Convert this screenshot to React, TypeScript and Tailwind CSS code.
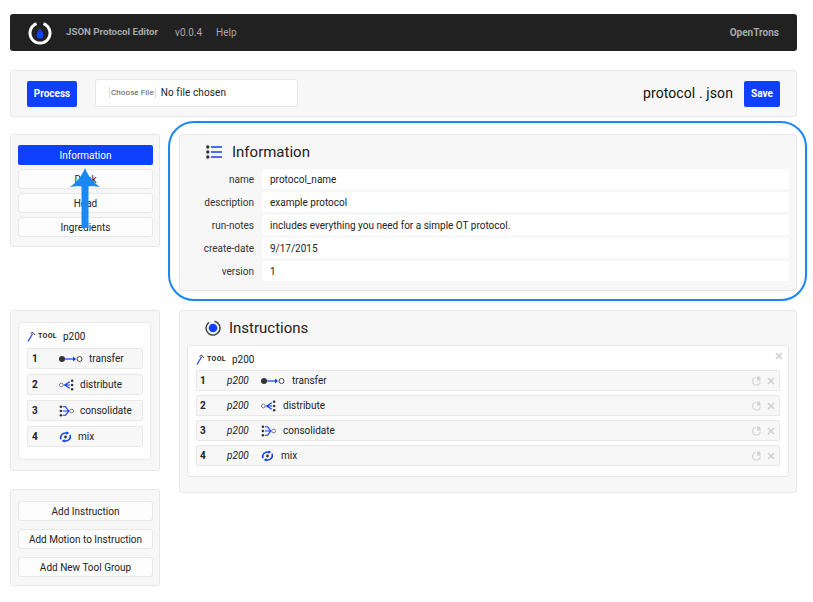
import React from 'react';

const font = { fontFamily: 'Roboto, sans-serif' };

const TransferIcon = () => (
    <svg width="24" height="8" viewBox="0 0 24 8" className="shrink-0">
        <circle cx="3" cy="4" r="3" fill="#333" />
        <path d="M6 4h10" stroke="#0f3fff" strokeWidth="1.2" fill="none" />
        <path d="M14 1.500L17 4l-3 2.500z" fill="#0f3fff" />
        <circle cx="20.500" cy="4" r="2.500" stroke="#444" strokeWidth="1" fill="#fff" />
    </svg>
);

const DistributeIcon = () => (
    <svg width="15" height="12" viewBox="0 0 16 12" className="shrink-0">
        <circle cx="2.500" cy="6" r="2" stroke="#555" strokeWidth="0.8" fill="#fff" />
        <path d="M5 6h7M6 6l5.500-3.500M6 6l5.500 3.500" stroke="#0f3fff" strokeWidth="1.200" fill="none" />
        <circle cx="14" cy="1.500" r="1.300" fill="#333" />
        <circle cx="14" cy="6" r="1.300" fill="#333" />
        <circle cx="14" cy="10.500" r="1.300" fill="#333" />
    </svg>
);

const ConsolidateIcon = () => (
    <svg width="15" height="12" viewBox="0 0 16 12" className="shrink-0">
        <circle cx="2" cy="1.500" r="1.300" fill="#333" />
        <circle cx="2" cy="6" r="1.300" fill="#333" />
        <circle cx="2" cy="10.500" r="1.300" fill="#333" />
        <path d="M4 1.500h3L10.500 6 7 10.500H4M4 6h6.500" stroke="#0f3fff" strokeWidth="1.200" fill="none" />
        <circle cx="13.500" cy="6" r="2" stroke="#555" strokeWidth="0.8" fill="#fff" />
    </svg>
);

const MixIcon = () => (
    <svg width="13" height="12" viewBox="0 0 14 12" className="shrink-0">
        <circle cx="7" cy="6" r="1.500" fill="#333" />
        <path d="M2 8.500C.8 4.500 4 1 8.500 1.800M12 3.500c1.200 4-2 7.500-6.500 6.700" stroke="#0f3fff" strokeWidth="1.700" fill="none" />
        <path d="M8 0l3 1.800L8 3.800zM6 8.200L3 10.200 6 12z" fill="#0f3fff" />
    </svg>
);

const HammerIcon = () => (
    <svg width="8" height="10" viewBox="0 0 8 10" className="shrink-0">
        <path d="M1 9.500L5.500 2" stroke="#0f3fff" strokeWidth="1.200" fill="none" />
        <path d="M3.500 1.300L6 .5 7.700 3" stroke="#333" strokeWidth="1" fill="none" />
    </svg>
);

const CopyIcon = () => (
    <svg width="9" height="10" viewBox="0 0 9 10">
        <path d="M4 1.500a3.800 3.800 0 1 0 4.200 4" stroke="#d4d4d4" strokeWidth="1.100" fill="none" />
        <path d="M5 .5h2.500L8.500 2v2.500H5z" fill="#d4d4d4" />
    </svg>
);

const CloseIcon = () => (
    <svg width="8" height="8" viewBox="0 0 8 8">
        <path d="M1 1l6 6M7 1L1 7" stroke="#d0d0d0" strokeWidth="1.700" />
    </svg>
);

const steps = [
    { n: 1, name: 'transfer', icon: <TransferIcon /> },
    { n: 2, name: 'distribute', icon: <DistributeIcon /> },
    { n: 3, name: 'consolidate', icon: <ConsolidateIcon /> },
    { n: 4, name: 'mix', icon: <MixIcon /> },
];

const info = [
    ['name', 'protocol_name'],
    ['description', 'example protocol'],
    ['run-notes', 'includes everything you need for a simple OT protocol.'],
    ['create-date', '9/17/2015'],
    ['version', '1'],
];

const panel = 'rounded-[3px] border border-[#e8e8e8] bg-[#f7f7f7]';
const whiteBtn =
    'flex items-center justify-center rounded-[3px] border border-[#e8e8e8] bg-[#fdfdfd] text-[10px] text-[#222]';

const ToolLabel = () => (
    <div className="flex items-center">
        <HammerIcon />
        <span className="ml-[3px] text-[7px] font-bold tracking-[0.3px] text-[#222]">TOOL</span>
        <span className="ml-[6px] text-[10px] text-[#222]">p200</span>
    </div>
);

const App = () => {
    return (
        <div className="relative h-[602px] w-[813px] overflow-hidden bg-[#fefefe]" style={font}>
            <div className="w-[787px] ml-[10px] pt-[14px]">
                <header className="flex h-[37px] items-center rounded-[3px] bg-[#212121] px-[18px] text-[10px] text-[#a8a8a8]">
                    <svg width="24" height="24" viewBox="0 0 24 24" className="shrink-0">
                        <path d="M8.500 2.700a10 10 0 1 0 7 0" stroke="#fff" strokeWidth="3" fill="none" />
                        <path d="M12 7.500c1.500 2.500 3.500 4 3.500 6.500a3.500 3.500 0 0 1-7 0c0-2.500 2-4 3.500-6.500z" fill="#0f3fff" />
                    </svg>
                    <span className="ml-[14px] text-[9.700px] font-bold">JSON Protocol Editor</span>
                    <span className="ml-[17px]">v0.0.4</span>
                    <span className="ml-[14px]">Help</span>
                    <span className="ml-auto font-bold">OpenTrons</span>
                </header>

                <div className={`${panel} mt-[19px] flex h-[47px] items-center px-[16px]`}>
                    <button className="h-[26px] w-[50px] rounded-[2px] bg-[#0f3fff] text-[10px] font-bold text-white">
                        Process
                    </button>
                    <div className="mb-[2px] ml-[18px] flex h-[28px] w-[203px] items-center rounded-[3px] border border-[#e8e8e8] bg-white pl-[13px] text-[10px] tracking-[0.1px] text-[#222]">
                        <span className="border-x border-[#ddd] px-[1px] text-[8px] leading-[11px] text-[#555]">
                            Choose File
                        </span>
                        <span className="ml-[5px]">No file chosen</span>
                    </div>
                    <span className="ml-auto text-[14px] tracking-[0.1px] text-[#111]">protocol . json</span>
                    <button className="ml-[11px] h-[26px] w-[36px] rounded-[2px] bg-[#0f3fff] text-[10px] font-bold text-white">
                        Save
                    </button>
                </div>

                <div className="mt-[17px] flex gap-[19px]">
                    <aside className="flex w-[150px] shrink-0 flex-col">
                        <nav className={`${panel} flex h-[113px] flex-col gap-[4px] pl-[7px] pr-[6px] pt-[10px]`}>
                            <div className="flex h-[20px] items-center justify-center rounded-[2px] bg-[#0f3fff] text-[10px] text-white">
                                Information
                            </div>
                            <div className={`${whiteBtn} h-[20px]`}>Deck</div>
                            <div className={`${whiteBtn} h-[20px]`}>Head</div>
                            <div className={`${whiteBtn} h-[20px]`}>Ingredients</div>
                        </nav>

                        <div className={`${panel} mt-[63px] h-[161px] pl-[7px] pr-[8px] pt-[11px]`}>
                            <div className="h-[138px] rounded-[3px] border border-[#e8e8e8] bg-white pl-[8px] pr-[7px] pt-[6px]">
                                <ToolLabel />
                                <div className="mt-[4px] flex flex-col gap-[5px]">
                                    {steps.map((s) => (
                                        <div
                                            key={s.n}
                                            className="flex h-[21px] items-center rounded-[2px] border border-[#e8e8e8] bg-[#f7f7f7] pl-[4px] text-[10px] text-[#222]"
                                        >
                                            <span className="w-[27px] shrink-0 font-bold">{s.n}</span>
                                            {s.icon}
                                            <span className="ml-[6px]">{s.name}</span>
                                        </div>
                                    ))}
                                </div>
                            </div>
                        </div>

                        <div className={`${panel} mt-[18px] flex h-[97px] flex-col gap-[8px] pl-[7px] pr-[6px] pt-[11px]`}>
                            <div className={`${whiteBtn} h-[20px]`}>Add Instruction</div>
                            <div className={`${whiteBtn} h-[20px]`}>Add Motion to Instruction</div>
                            <div className={`${whiteBtn} h-[20px]`}>Add New Tool Group</div>
                        </div>
                    </aside>

                    <main className="min-w-0 flex-1">
                        <section className={`${panel} h-[157px] px-[7px]`}>
                            <div className="flex h-[34px] items-center pl-[19px]">
                                <svg width="16" height="14" viewBox="0 0 16 14" className="shrink-0">
                                    <circle cx="1.800" cy="2" r="1.700" fill="#333" />
                                    <circle cx="1.800" cy="7" r="1.700" fill="#333" />
                                    <circle cx="1.800" cy="12" r="1.700" fill="#333" />
                                    <path d="M5 2h11M5 7h11M5 12h11" stroke="#0f3fff" strokeWidth="1.300" />
                                </svg>
                                <h2 className="ml-[10px] text-[15px] text-[#222]">Information</h2>
                            </div>
                            <div className="flex flex-col gap-[3px]">
                                {info.map(([k, v]) => (
                                    <div key={k} className="flex h-[20px] items-center text-[10px] text-[#222]">
                                        <span className="w-[67px] shrink-0 text-right text-[#333]">{k}</span>
                                        <span className="ml-[8px] flex h-full flex-1 items-center rounded-[2px] bg-white pl-[8px]">
                                            {v}
                                        </span>
                                    </div>
                                ))}
                            </div>
                        </section>

                        <section className={`${panel} mt-[19px] h-[183px] px-[7px]`}>
                            <div className="flex h-[34px] items-center pl-[18px]">
                                <svg width="16" height="16" viewBox="0 0 16 16" className="shrink-0">
                                    <path d="M9.500 1.200A7 7 0 1 1 4 2.300" stroke="#444" strokeWidth="1.500" fill="none" />
                                    <circle cx="8" cy="8" r="4.300" fill="#0f3fff" />
                                </svg>
                                <h2 className="ml-[8px] text-[15px] text-[#222]">Instructions</h2>
                            </div>
                            <div className="relative h-[132px] rounded-[3px] border border-[#e8e8e8] bg-white px-[8px] pt-[6px]">
                                <ToolLabel />
                                <span className="absolute right-[5px] top-[6px] flex">
                                    <CloseIcon />
                                </span>
                                <div className="mt-[3px] flex flex-col gap-[4px]">
                                    {steps.map((s) => (
                                        <div
                                            key={s.n}
                                            className="flex h-[21px] items-center rounded-[2px] border border-[#e8e8e8] bg-[#f7f7f7] px-[3px] text-[10px] text-[#222]"
                                        >
                                            <span className="w-[27px] shrink-0 font-bold">{s.n}</span>
                                            <span className="w-[34px] shrink-0 italic">p200</span>
                                            {s.icon}
                                            <span className="ml-[7px]">{s.name}</span>
                                            <span className="ml-auto flex items-center gap-[6px] pr-[1px]">
                                                <CopyIcon />
                                                <CloseIcon />
                                            </span>
                                        </div>
                                    ))}
                                </div>
                            </div>
                        </section>
                    </main>
                </div>
            </div>

            {/* annotation drawn over the page */}
            <div className="pointer-events-none absolute left-[168px] top-[121px] h-[180px] w-[639px] rounded-[26px] border-2 border-[#1a87f5]" />
            <svg width="30" height="60" viewBox="0 0 30 60" className="pointer-events-none absolute left-[70px] top-[168px]">
                <path d="M15 0C18 8 24 15 30 19 25 18 21 18 18.500 18.500V60H11.500V18.500C9 18 5 18 0 19 6 15 12 8 15 0z" fill="#1a87f5" />
            </svg>
        </div>
    );
};

export default App;
